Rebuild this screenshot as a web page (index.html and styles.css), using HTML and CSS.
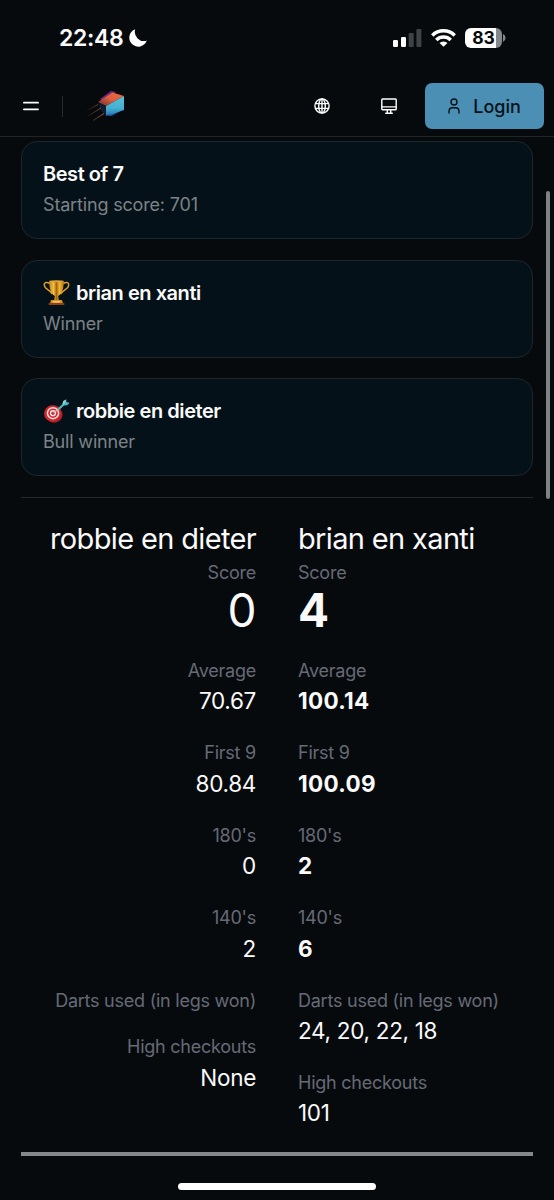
FILE: index.html
```html
<!DOCTYPE html>
<html lang="en">
<head>
    <meta charset="UTF-8">
    <meta name="viewport" content="width=device-width, initial-scale=1.0">
    <title>Match</title>
    <link rel="stylesheet" href="styles.css">
</head>
<body>
    <div class="status-bar">
        <span class="clock">22:48</span>
        <svg class="moon" width="20" height="20" viewBox="0 0 20 20"><path fill="#fff" d="M7.2 1.2A9 9 0 1 0 18.8 12.6 9.2 9.2 0 0 1 7.2 1.2z"/></svg>
        <svg class="signal" width="29" height="18" viewBox="0 0 29 18">
            <rect x="0" y="11" width="5" height="7" rx="1.3" fill="#fff"/>
            <rect x="8" y="8" width="5" height="10" rx="1.3" fill="#fff"/>
            <rect x="15.7" y="4" width="5" height="14" rx="1.3" fill="#404346"/>
            <rect x="23.4" y="0" width="5" height="18" rx="1.3" fill="#404346"/>
        </svg>
        <svg class="wifi" width="25" height="18" viewBox="0 0 25 18">
            <g fill="none" stroke="#fff" stroke-width="3.5">
                <path d="M1.3 6.4a16 16 0 0 1 22.4 0"/>
                <path d="M5.3 10.900a10.200 10.200 0 0 1 14.400 0"/>
            </g>
            <path fill="#fff" d="M12.5 17.8 8.5 14a5.8 5.8 0 0 1 8 0z"/>
        </svg>
        <div class="battery">83</div>
        <svg class="battery-tip" width="3" height="8" viewBox="0 0 3 8"><path fill="#85888a" d="M0 0a4.4 4.4 0 0 1 0 8z"/></svg>
    </div>

    <header class="navbar">
        <svg class="menu" width="16" height="10" viewBox="0 0 16 10"><path stroke="#fff" stroke-width="1.7" stroke-linecap="round" d="M.9 1.7h14.2M.9 8.3h14.2"/></svg>
        <span class="divider"></span>
        <svg class="logo" width="40" height="32" viewBox="0 0 40 32">
            <defs>
                <linearGradient id="top" x1="0" y1="1" x2="1" y2="0">
                    <stop offset="0" stop-color="#6b2a2c"/>
                    <stop offset=".5" stop-color="#e0603f"/>
                    <stop offset="1" stop-color="#ee6440"/>
                </linearGradient>
                <linearGradient id="front" x1="0" y1="0" x2="0" y2="1">
                    <stop offset="0" stop-color="#58c0d6"/>
                    <stop offset=".6" stop-color="#46b0d2"/>
                    <stop offset="1" stop-color="#2570b5"/>
                </linearGradient>
                <linearGradient id="trail">
                    <stop offset="0" stop-color="#8c4433" stop-opacity=".15"/>
                    <stop offset="1" stop-color="#c06a4c"/>
                </linearGradient>
            </defs>
            <path fill="#71277d" d="M14 9 25 1l5 1-13 9z"/>
            <path fill="url(#top)" d="m12 12 14.500-9.500L38 6 20 16z"/>
            <path fill="#101c30" d="m12 12 8 4v10l-6-7z"/>
            <path fill="#174c91" d="m22 24 14-4-10 6h-4z"/>
            <path fill="url(#front)" d="m20 16 18-10v14l-14 5v-1l-4 2z"/>
            <path fill="none" stroke="url(#trail)" stroke-width=".9" d="m1 20.500 11-6M2 26l13-8M7 30.500l11-7"/>
        </svg>
        <svg class="globe" width="16" height="16" viewBox="0 0 16 16" fill="none" stroke="#fff" stroke-width="1.4">
            <circle cx="8" cy="8" r="7.1"/>
            <ellipse cx="8" cy="8" rx="3.3" ry="7.1"/>
            <path d="M1.5 5.6h13M1.5 10.4h13M8 1v14"/>
        </svg>
        <svg class="monitor" width="16" height="16" viewBox="0 0 16 16" fill="none" stroke="#fff" stroke-width="1.4" stroke-linejoin="round" stroke-linecap="round">
            <rect x=".8" y="1" width="14.4" height="10.8" rx=".8"/>
            <path d="M1 8.9h14M6.300 12v2.800M9.700 12v2.800M4.700 15.200h6.600"/>
        </svg>
        <button class="login" type="button">
            <svg width="12" height="16" viewBox="0 0 12 16" fill="none" stroke="#071218" stroke-width="1.4" stroke-linecap="round" stroke-linejoin="round">
                <circle cx="6" cy="4" r="3"/>
                <path d="M1 15v-1.600C1 11 2.600 9.700 4.600 9.700h2.800c2 0 3.600 1.300 3.600 3.700V15"/>
            </svg>
            <span>Login</span>
        </button>
    </header>

    <main class="content">
        <section class="card">
            <h3>Best of 7</h3>
            <p>Starting score: 701</p>
        </section>
        <section class="card">
            <h3>
                <svg width="27" height="27" viewBox="0 0 27 27">
                    <defs>
                        <linearGradient id="gold">
                            <stop offset="0" stop-color="#c77e0c"/>
                            <stop offset=".3" stop-color="#f0c04a"/>
                            <stop offset=".5" stop-color="#a86508"/>
                            <stop offset=".7" stop-color="#f0b83a"/>
                            <stop offset="1" stop-color="#ba7410"/>
                        </linearGradient>
                    </defs>
                    <path fill="none" stroke="#dca331" stroke-width="1.5" d="M7 4.500C3 2.500.8 3.500 1.300 6.300 2 10.500 6 10 9.500 15M20 4.500c4-2 6.200-1 5.700 1.800-.7 4.200-4.700 3.700-8.200 8.700"/>
                    <path fill="url(#gold)" d="M6.200 2h14.600c0 8-1.600 12.500-5.600 15l.6 4.500h-4.600l.6-4.500c-4-2.500-5.600-7-5.600-15z"/>
                    <ellipse cx="13.5" cy="2.2" rx="7.3" ry="1" fill="#dba53c"/>
                    <path fill="#d6911f" d="M8 21h11l1 3.500H7z"/>
                    <path fill="#f3c078" d="M10 22h7v1.500h-7z"/>
                    <rect x="5.5" y="24" width="16" height="2" rx="1" fill="#8c4218"/>
                </svg>
                brian en xanti
            </h3>
            <p>Winner</p>
        </section>
        <section class="card">
            <h3>
                <svg width="27" height="27" viewBox="0 0 27 27">
                    <ellipse cx="10.7" cy="16.2" rx="9" ry="8.4" fill="#951d22" transform="rotate(30 10.700 16.200)"/>
                    <ellipse cx="9.8" cy="15.5" rx="8.8" ry="8.300" fill="#d0262e"/>
                    <circle cx="10" cy="15.2" r="6.2" fill="#f4e6e6"/>
                    <circle cx="10" cy="15.2" r="4.8" fill="#cc2a33"/>
                    <circle cx="10" cy="15.2" r="3.1" fill="#fae8e8"/>
                    <circle cx="10" cy="15.2" r="1.7" fill="#cc2a33"/>
                    <path stroke="#c9b9a4" stroke-width="1.3" d="m10.500 15 8-6"/>
                    <path fill="#4bb4bd" d="m14.500 10.500 5-4.500.8-3 2.900-1.600.2 2.700 3.200.6-2.200 2.600-3.200.2-5.400 4.300z"/>
                    <path fill="#8ad3d6" d="m19.500 6 .8-3 2.900-1.600-.8 3.200-1.700 2.400z"/>
                </svg>
                robbie en dieter
            </h3>
            <p>Bull winner</p>
        </section>

        <div class="stats">
            <div class="player left">
                <h2>robbie en dieter</h2>
                <dl>
                    <dt>Score</dt><dd class="score">0</dd>
                    <dt>Average</dt><dd>70.67</dd>
                    <dt>First 9</dt><dd>80.84</dd>
                    <dt>180's</dt><dd>0</dd>
                    <dt>140's</dt><dd>2</dd>
                    <dt>Darts used (in legs won)</dt><dd></dd>
                    <dt>High checkouts</dt><dd>None</dd>
                </dl>
            </div>
            <div class="player">
                <h2>brian en xanti</h2>
                <dl>
                    <dt>Score</dt><dd class="score best">4</dd>
                    <dt>Average</dt><dd class="best">100.14</dd>
                    <dt>First 9</dt><dd class="best">100.09</dd>
                    <dt>180's</dt><dd class="best">2</dd>
                    <dt>140's</dt><dd class="best">6</dd>
                    <dt>Darts used (in legs won)</dt><dd>24, 20, 22, 18</dd>
                    <dt>High checkouts</dt><dd>101</dd>
                </dl>
            </div>
        </div>
    </main>

    <div class="scrollbar"></div>
    <div class="home-indicator"></div>
</body>
</html>
```
FILE: styles.css
```css
* {
    box-sizing: border-box;
}
body {
    margin: 0;
    height: 1200px;
    overflow: hidden;
    position: relative;
    background-color: #070a0d;
    color: #fafafa;
    font-family: Inter, "Liberation Sans", sans-serif;
}
svg {
    display: block;
    flex: none;
}
h2, h3, p, dl, dd {
    margin: 0;
}
.status-bar {
    height: 77px;
    padding: 0 48px 2px 59px;
    display: flex;
    align-items: center;
}
.clock {
    width: 66px;
    font-size: 23px;
    font-weight: 600;
    letter-spacing: -0.3px;
}
.moon {
    margin-left: 3px;
}
.signal {
    margin-left: auto;
}
.wifi {
    margin-left: 9px;
}
.battery {
    width: 37px;
    height: 20px;
    margin-left: 9px;
    border-radius: 6px;
    background: linear-gradient(to right, #fff 83%, #85888a 83%);
    color: #070a0d;
    font-size: 17.5px;
    font-weight: 700;
    line-height: 20px;
    letter-spacing: -0.2px;
    text-align: center;
}
.battery-tip {
    margin-left: 1px;
}
.navbar {
    height: 60px;
    padding: 0 10px 1px 23px;
    border-bottom: 1px solid #212529;
    display: flex;
    align-items: center;
}
.divider {
    width: 1px;
    height: 21px;
    margin: 0 23px;
    background-color: #26292d;
}
.globe {
    margin-left: auto;
}
.monitor {
    margin: 0 28px 0 51px;
}
.login {
    width: 119px;
    height: 46px;
    padding: 0;
    border: none;
    border-radius: 7px;
    background-color: #4b8fb4;
    color: #071218;
    display: flex;
    align-items: center;
    justify-content: center;
    gap: 13px;
    font-family: inherit;
    font-size: 18px;
    font-weight: 450;
}
.content {
    margin: 4px 21px 0;
}
.card {
    height: 98px;
    margin-bottom: 20.5px;
    padding: 18px 21px;
    border: 1px solid #1c272d;
    border-radius: 16px;
    background-color: #051118;
}
.card h3 {
    height: 28px;
    display: flex;
    align-items: center;
    gap: 6px;
    font-size: 20px;
    font-weight: 600;
    letter-spacing: -0.45px;
}
.card p {
    margin-top: 3px;
    color: #7c8387;
    font-size: 18px;
    line-height: 28px;
    letter-spacing: -0.17px;
}
.stats {
    padding-top: 20.4px;
    height: 659px;
    border-top: 1px solid #25292c;
    border-bottom: 4px solid #85888b;
    display: grid;
    grid-template-columns: 1fr 1fr;
    gap: 42px;
}
.left {
    text-align: right;
}
.player h2 {
    font-size: 29px;
    font-weight: 400;
    line-height: 42px;
    letter-spacing: -0.65px;
    white-space: nowrap;
}
dt {
    color: #666a76;
    font-size: 18px;
    line-height: 25.5px;
    letter-spacing: -0.24px;
}
dd {
    margin-bottom: 21px;
    font-size: 22.5px;
    line-height: 35.9px;
    letter-spacing: -0.3px;
}
.best {
    font-weight: 700;
    letter-spacing: 0.3px;
}
.score {
    font-size: 46px;
    line-height: 51.5px;
    letter-spacing: -0.5px;
}
.scrollbar {
    position: absolute;
    top: 191px;
    right: 4px;
    width: 4px;
    height: 308px;
    border-radius: 2px;
    background-color: #7f8284;
}
.home-indicator {
    position: absolute;
    top: 1183px;
    left: 178px;
    width: 198px;
    height: 7px;
    border-radius: 4px;
    background-color: #fff;
}
```
